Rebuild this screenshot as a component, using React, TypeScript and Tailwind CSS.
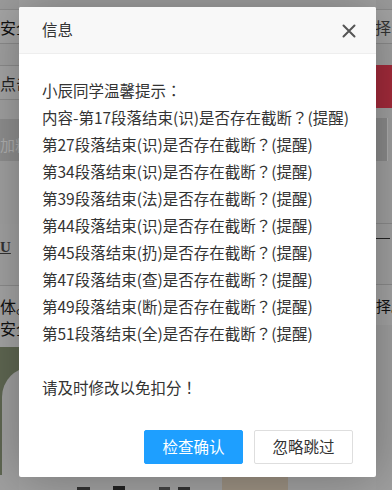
import React from "react";

const lines = [
  "小辰同学温馨提示：",
  "内容-第17段落结束(识)是否存在截断？(提醒)",
  "第27段落结束(识)是否存在截断？(提醒)",
  "第34段落结束(识)是否存在截断？(提醒)",
  "第39段落结束(法)是否存在截断？(提醒)",
  "第44段落结束(识)是否存在截断？(提醒)",
  "第45段落结束(扔)是否存在截断？(提醒)",
  "第47段落结束(查)是否存在截断？(提醒)",
  "第49段落结束(断)是否存在截断？(提醒)",
  "第51段落结束(全)是否存在截断？(提醒)",
];

function Punct({ text }: { text: string }) {
  const parts = text.split(/([？：！])/);
  return (
    <>
      {parts.map((p, i) =>
        /^[？：！]$/.test(p) ? (
          <span key={i} style={{ fontFamily: '"Noto Sans CJK TC", "Noto Sans CJK SC", sans-serif' }}>
            {p}
          </span>
        ) : (
          <React.Fragment key={i}>{p}</React.Fragment>
        )
      )}
    </>
  );
}

export default function App() {
  return (
    <div
      className="relative w-[392px] h-[490px] overflow-hidden bg-[#a2a2a2]"
      style={{ fontFamily: '"Noto Sans CJK SC", "Noto Sans", sans-serif' }}
    >
      {/* dimmed page behind */}
      <div className="flex w-full h-full">
        {/* left strip */}
        <div className="flex flex-col w-[19px] h-full shrink-0">
          <div className="h-[10px] bg-[#9c9c9c] border-b border-[#8c8c8c]" />
          <div className="h-[34px] bg-[#a5a5a5] border-b border-[#8c8c8c] flex items-center whitespace-nowrap text-[16px] text-[#111] leading-none">
            安全
          </div>
          <div className="h-[22px] bg-[#a1a1a1] border-b border-[#8c8c8c]" />
          <div className="h-[34px] bg-[#a5a5a5] border-b border-[#8c8c8c] flex items-center whitespace-nowrap text-[16px] text-[#222] leading-none">
            点击
          </div>
          <div className="h-[19px] bg-[#a1a1a1]" />
          <div className="h-[42px] bg-[#8f8f8f] flex items-end pb-[9px] whitespace-nowrap text-[15px] text-[#b0b0b0] leading-none">
            加粗
          </div>
          <div className="h-[63px] bg-[#a1a1a1]" />
          <div className="h-[62px] bg-[#a2a2a2] border-b border-[#8c8c8c] pt-[9px]">
            <span className="font-bold underline text-[15px] text-[#333] leading-none" style={{ fontFamily: '"Liberation Serif", serif' }}>
              U
            </span>
          </div>
          <div className="h-[61px] bg-[#a5a5a5] flex flex-col justify-center gap-[2px] whitespace-nowrap text-[16px] text-[#111] leading-[20px]">
            <span>体。</span>
            <span>安全</span>
          </div>
          <div className="h-[128px] bg-[#5f6752] relative overflow-hidden">
            <div className="absolute left-[2px] top-[20px] w-[60px] h-[160px] rounded-tl-[30px] bg-[#a0a0a0]" />
          </div>
          <div className="flex-1 bg-[#a0a0a0]" />
        </div>
        {/* middle */}
        <div className="flex-1 flex flex-col">
          <div className="flex-1" />
          <div className="h-[13px] flex items-end">
            <div className="w-[58px]" />
            <div className="w-[13px] h-[3px] bg-[#333]" />
            <div className="w-[23px]" />
            <div className="w-[12px] h-[4px] bg-[#222]" />
            <div className="w-[34px]" />
            <div className="w-[11px] h-[3px] bg-[#444]" />
            <div className="w-[8px]" />
            <div className="w-[12px] h-[3px] bg-[#333]" />
            <div className="w-[32px]" />
            <div className="w-[66px] h-[13px] bg-[#9d9283]" />
          </div>
        </div>
        {/* right strip */}
        <div className="flex flex-col w-[16px] h-full shrink-0">
          <div className="h-[10px] bg-[#9c9c9c] border-b border-[#8c8c8c]" />
          <div className="h-[34px] bg-[#a5a5a5] border-b border-[#8c8c8c] flex items-center justify-end whitespace-nowrap text-[16px] text-[#333] leading-none overflow-visible">
            <span className="mr-[1px]">择</span>
          </div>
          <div className="h-[21px] bg-[#a1a1a1]" />
          <div className="h-[43px] bg-[#a42b3b]" />
          <div className="h-[10px] bg-[#a1a1a1]" />
          <div className="h-[43px] flex">
            <div className="w-[11px] bg-[#8c8c8c]" />
            <div className="flex-1 bg-[#a0a0a0] border-l border-[#b0b0b0]" />
          </div>
          <div className="h-[63px] bg-[#a1a1a1] border-b border-[#8c8c8c]" />
          <div className="h-[61px] bg-[#a2a2a2] border-b border-[#8c8c8c] pt-[14px]">
            <div className="w-[14px] h-[1px] bg-[#222]" />
          </div>
          <div className="h-[40px] bg-[#a5a5a5] flex items-center whitespace-nowrap text-[15px] text-[#111] leading-none">
            择。
          </div>
          <div className="flex-1 bg-[#a0a0a0]" />
        </div>
      </div>

      {/* dialog */}
      <div className="absolute left-[19px] top-[7px] w-[357px] h-[470px] bg-white rounded-[2px] shadow-[1px_1px_50px_rgba(0,0,0,0.3)] flex flex-col overflow-hidden">
        <div className="h-[47px] shrink-0 bg-[#f8f8f8] border-b border-[#eeeeee] flex items-center justify-between pl-[23px] pr-[20px]">
          <span className="text-[15.5px] text-[#333]">信息</span>
          <svg width="14" height="14" viewBox="0 0 14 14" className="mt-[1px]">
            <path d="M1.5 1.5 L12.5 12.5 M12.5 1.5 L1.5 12.5" stroke="#555" strokeWidth="2" strokeLinecap="round" />
          </svg>
        </div>
        <div className="flex-1 pt-[23px] pl-[23px] pr-[10px] text-[15.5px] leading-[27px] text-[#333] whitespace-nowrap">
          {lines.map((l, i) => (
            <div key={i}>
              <Punct text={l} />
            </div>
          ))}
          <div className="h-[27px]" />
          <div>
            <Punct text="请及时修改以免扣分！" />
          </div>
        </div>
        <div className="flex justify-end gap-[11px] pr-[23px] pb-[13px]">
          <button className="w-[99px] h-[34px] rounded-[2px] bg-[#1e9fff] text-white text-[15.5px] border border-[#1e9fff]">
            检查确认
          </button>
          <button className="w-[99px] h-[34px] rounded-[2px] bg-white text-[#333] text-[15.5px] border border-[#dedede]">
            忽略跳过
          </button>
        </div>
      </div>
    </div>
  );
}
